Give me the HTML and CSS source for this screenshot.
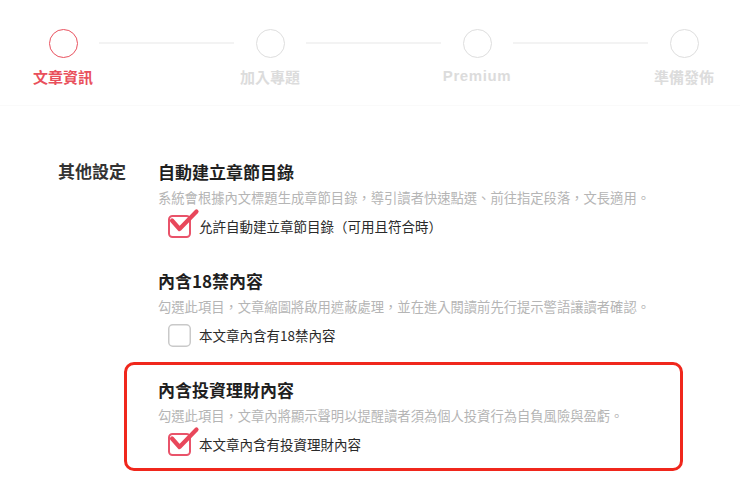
FILE: index.html
```html
<!DOCTYPE html>
<html lang="zh-Hant">
<head>
<meta charset="utf-8">
<title>文章設定</title>
<link rel="stylesheet" href="styles.css">
</head>
<body>
<header class="stepper">
  <div class="step active">
    <span class="dot"></span>
    <span class="step-label">文章資訊</span>
  </div>
  <div class="connector"></div>
  <div class="step">
    <span class="dot"></span>
    <span class="step-label">加入專題</span>
  </div>
  <div class="connector"></div>
  <div class="step">
    <span class="dot"></span>
    <span class="step-label latin">Premium</span>
  </div>
  <div class="connector"></div>
  <div class="step">
    <span class="dot"></span>
    <span class="step-label">準備發佈</span>
  </div>
</header>

<main class="settings">
  <div class="section-label">其他設定</div>
  <div class="section-body">
    <div class="group">
      <div class="group-title">自動建立章節目錄</div>
      <div class="group-desc">系統會根據內文標題生成章節目錄，導引讀者快速點選、前往指定段落，文長適用。</div>
      <label class="check-row">
        <svg class="box" width="23" height="23" viewBox="0 0 23 23">
          <rect x="1" y="1" width="21" height="21" rx="3.5" class="box-checked"/>
          <path d="M4 5.5 L11.5 14 L28.5 -3.5" class="tick"/>
        </svg>
        <span class="check-text">允許自動建立章節目錄（可用且符合時）</span>
      </label>
    </div>

    <div class="group">
      <div class="group-title">內含18禁內容</div>
      <div class="group-desc">勾選此項目，文章縮圖將啟用遮蔽處理，並在進入閱讀前先行提示警語讓讀者確認。</div>
      <label class="check-row">
        <svg class="box" width="23" height="23" viewBox="0 0 23 23">
          <rect x="0.75" y="0.75" width="21.5" height="21.5" rx="4" class="box-empty"/>
        </svg>
        <span class="check-text">本文章內含有18禁內容</span>
      </label>
    </div>

    <div class="group highlight">
      <div class="group-title">內含投資理財內容</div>
      <div class="group-desc">勾選此項目，文章內將顯示聲明以提醒讀者須為個人投資行為自負風險與盈虧。</div>
      <label class="check-row">
        <svg class="box" width="23" height="23" viewBox="0 0 23 23">
          <rect x="1" y="1" width="21" height="21" rx="3.5" class="box-checked"/>
          <path d="M4 5.5 L11.5 14 L28.5 -3.5" class="tick"/>
        </svg>
        <span class="check-text">本文章內含有投資理財內容</span>
      </label>
    </div>
  </div>
</main>
</body>
</html>
```

FILE: styles.css
```css
* {
  box-sizing: border-box;
}

html, body {
  margin: 0;
  padding: 0;
  background: #ffffff;
}

body {
  width: 740px;
  height: 482px;
  overflow: hidden;
  font-family: "Noto Sans CJK TC", "Noto Sans", sans-serif;
  color: #222222;
}

/* ---------- stepper ---------- */
.stepper {
  display: flex;
  align-items: flex-start;
  height: 106px;
  padding: 29px 20px 0 27px;
  border-bottom: 1px solid #fafafa;
}

.step {
  flex: none;
  width: 72px;
  display: flex;
  flex-direction: column;
  align-items: center;
}

.dot {
  display: block;
  width: 29px;
  height: 29px;
  border-radius: 50%;
  border: 1.5px solid #dedede;
}

.step.active .dot {
  border-color: #e9525f;
}

.step-label {
  margin-top: 9px;
  font-size: 15px;
  line-height: 20px;
  font-weight: 700;
  color: #dcdcdc;
  white-space: nowrap;
}

.step-label.latin {
  font-family: "Liberation Sans", Arial, sans-serif;
  letter-spacing: 0.6px;
  margin-top: 8px;
}

.step.active .step-label {
  color: #e9505c;
}

.connector {
  flex: 1;
  height: 2px;
  margin-top: 13px;
  background: #f3f3f3;
}

/* ---------- settings ---------- */
.settings {
  display: grid;
  grid-template-columns: 100px 1fr;
  padding: 54px 0 0 58px;
}

.section-label {
  font-size: 17px;
  line-height: 22px;
  font-weight: 700;
  color: #333333;
}

.group + .group {
  margin-top: 31px;
}

.group-title {
  font-size: 17px;
  line-height: 24px;
  font-weight: 700;
  color: #1f1f1f;
}

.group-desc {
  margin-top: 4px;
  font-size: 13.3px;
  line-height: 20px;
  color: #b5b5b5;
  white-space: nowrap;
}

.check-row {
  display: flex;
  align-items: center;
  margin-top: 6px;
  padding-left: 10px;
  height: 24px;
}

.box {
  flex: none;
  overflow: visible;
}

.box-checked {
  fill: #ffffff;
  stroke: #e9536a;
  stroke-width: 2;
}

.box-empty {
  fill: #ffffff;
  stroke: #c9c9c9;
  stroke-width: 1.5;
}

.tick {
  fill: none;
  stroke: #e8475b;
  stroke-width: 4.2;
  stroke-linecap: round;
  stroke-linejoin: round;
}

.check-text {
  margin-left: 8px;
  font-size: 13.5px;
  line-height: 20px;
  color: #2a2a2a;
  white-space: nowrap;
}

.group.highlight {
  margin-top: 15px;
  margin-left: -34px;
  width: 559px;
  padding: 13px 0 12px 31px;
  border: 3px solid #f0271c;
  border-radius: 10px;
}
```
